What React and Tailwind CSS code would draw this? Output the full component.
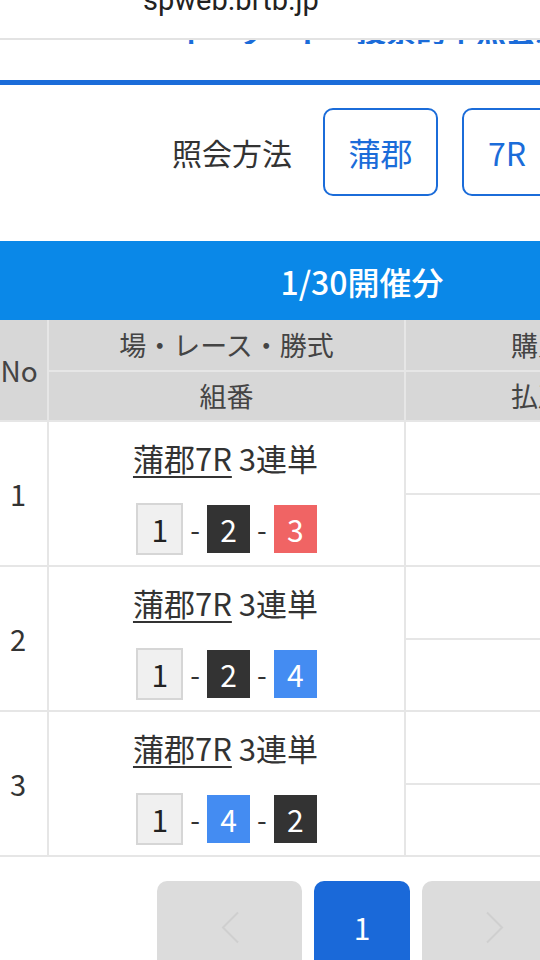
import React from "react";

const jp = { fontFamily: '"Noto Sans CJK JP", "Noto Sans", sans-serif' };

function Box({ n, kind }) {
  const cls =
    kind === "w"
      ? "bg-[#f0f0f0] text-[#222] border-2 border-[#d6d6d6]"
      : kind === "k"
      ? "bg-[#333333] text-white"
      : kind === "r"
      ? "bg-[#f06464] text-white"
      : "bg-[#448cf2] text-white";
  return (
    <span
      className={`box-content w-[43px] h-[48px] flex items-center justify-center text-[30px] leading-none ${cls}`}
    >
      {n}
    </span>
  );
}

function Row({ no, combo }) {
  return (
    <div className="grid grid-cols-[47px_355px_1fr] gap-[2px] h-[143px]">
      <div className="bg-white flex items-center justify-center pr-[11px] text-[29px] text-[#333]">
        {no}
      </div>
      <div className="bg-white flex flex-col items-center pt-[16px]">
        <div className="text-[31px] leading-[40px] text-[#333] pr-[2px]">
          <span className="underline decoration-[2px] underline-offset-[5px]">蒲郡7R</span> 3連単
        </div>
        <div className="mt-[25px] flex items-center gap-[7px] text-[#333]">
          <Box n={combo[0][0]} kind={combo[0][1]} />
          <span className="text-[28px] leading-none">-</span>
          <Box n={combo[1][0]} kind={combo[1][1]} />
          <span className="text-[28px] leading-none">-</span>
          <Box n={combo[2][0]} kind={combo[2][1]} />
        </div>
      </div>
      <div className="flex flex-col gap-[2px]">
        <div className="bg-white flex-1" />
        <div className="bg-white flex-1" />
      </div>
    </div>
  );
}

function Chevron({ dir }) {
  return (
    <svg width="20" height="33" viewBox="0 0 20 33" fill="none">
      {dir === "l" ? (
        <path d="M18 1.5 L3 16.5 L18 31.5" stroke="#cfcfcf" strokeWidth="2" />
      ) : (
        <path d="M2 1.5 L17 16.5 L2 31.5" stroke="#cfcfcf" strokeWidth="2" />
      )}
    </svg>
  );
}

export default function App() {
  return (
    <div className="w-[540px] h-[960px] overflow-hidden bg-white" style={jp}>
      <div className="w-[724px]">
        {/* browser url bar */}
        <div className="h-[40px] overflow-hidden border-b-2 border-[#e3e3e3] bg-white pl-[143px]">
          <div
            className="mt-[-15px] text-[29px] leading-[30px] text-[#222]"
            style={{ fontFamily: "Roboto, sans-serif" }}
          >
            spweb.brtb.jp
          </div>
        </div>
        {/* heading scrolled under the bar: only the bottom of its glyphs shows */}
        <div className="h-[4px] overflow-hidden flex items-end pl-[176px]">
          <div className="shrink-0 text-[30px] leading-[30px] font-bold text-[#1b6cd9] whitespace-nowrap">
            ネ　ッ　ト　投票的中照会結果確認
          </div>
        </div>
        <div className="h-[36px]" />
        <div className="h-[5px] bg-[#1b6cd9]" />
        {/* query method */}
        <div className="pt-[23px] pb-[45px] flex items-center justify-center">
          <span className="text-[30px] text-[#333] mr-[31px]">照会方法</span>
          <span className="w-[115px] h-[88px] border-2 border-[#1b6cd9] rounded-[10px] flex items-center justify-center text-[32px] text-[#1b6cd9]">
            蒲郡
          </span>
          <span className="ml-[24px] w-[90px] h-[88px] border-2 border-[#1b6cd9] rounded-[10px] flex items-center justify-center text-[32px] text-[#1b6cd9]">
            7R
          </span>
        </div>
        {/* title bar */}
        <div className="h-[79px] bg-[#0a88e8] flex items-center justify-center text-white text-[32px] font-medium">
          1/30開催分
        </div>
        {/* table */}
        <div className="bg-[#e6e6e6] flex flex-col gap-[2px] pb-[2px]">
          <div className="grid grid-cols-[47px_355px_1fr] gap-[2px] h-[100px]">
            <div className="bg-[#d7d7d7] flex items-center justify-center pr-[9px] text-[28px] text-[#444]">
              No
            </div>
            <div className="flex flex-col gap-[2px]">
              <div className="h-[50px] bg-[#d7d7d7] flex items-center justify-center text-[27px] text-[#444]">
                場・レース・勝式
              </div>
              <div className="flex-1 bg-[#d7d7d7] flex items-center justify-center text-[27px] text-[#444]">
                組番
              </div>
            </div>
            <div className="flex flex-col gap-[2px]">
              <div className="h-[50px] bg-[#d7d7d7] flex items-center justify-center text-[27px] text-[#444]">
                購入金額
              </div>
              <div className="flex-1 bg-[#d7d7d7] flex items-center justify-center text-[27px] text-[#444]">
                払戻金額
              </div>
            </div>
          </div>
          <Row no="1" combo={[["1", "w"], ["2", "k"], ["3", "r"]]} />
          <Row no="2" combo={[["1", "w"], ["2", "k"], ["4", "b"]]} />
          <Row no="3" combo={[["1", "w"], ["4", "b"], ["2", "k"]]} />
        </div>
        {/* pagination */}
        <div className="mt-[24px] flex justify-center gap-[12px]">
          <div className="w-[145px] h-[93px] rounded-[10px] bg-[#dcdcdc] flex items-center justify-center">
            <Chevron dir="l" />
          </div>
          <div className="w-[96px] h-[93px] rounded-[10px] bg-[#1a69d9] flex items-center justify-center text-white text-[30px]">
            1
          </div>
          <div className="w-[145px] h-[93px] rounded-[10px] bg-[#dcdcdc] flex items-center justify-center">
            <Chevron dir="r" />
          </div>
        </div>
      </div>
    </div>
  );
}
